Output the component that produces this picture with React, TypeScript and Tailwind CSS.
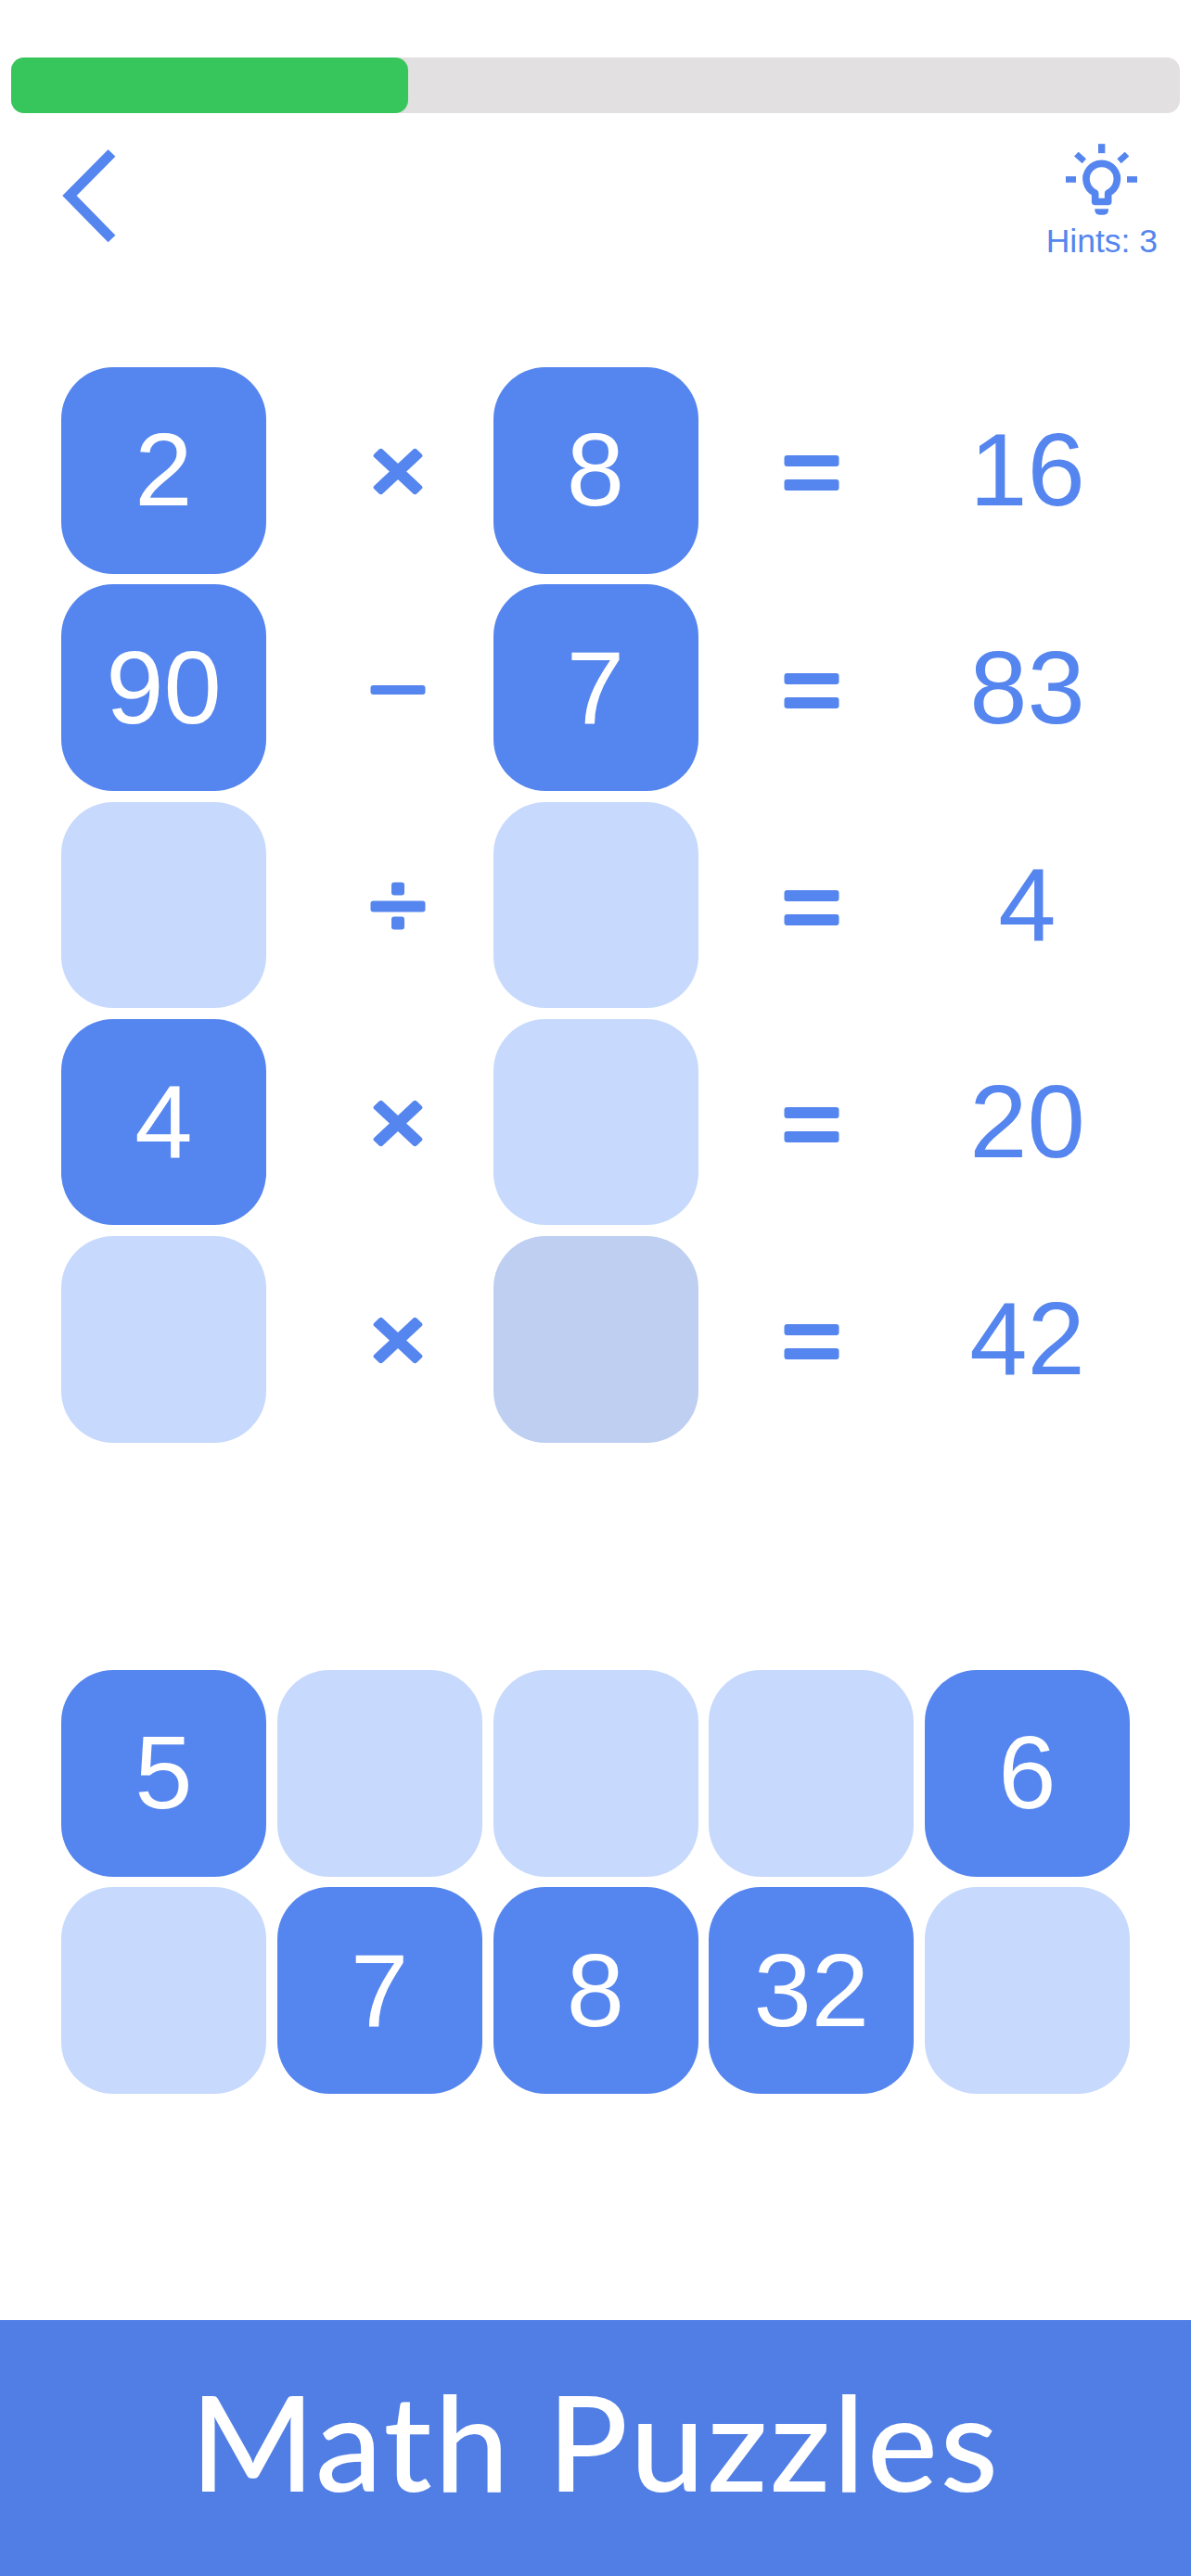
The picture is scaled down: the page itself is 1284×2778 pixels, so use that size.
const blue = 'bg-[#5585ee]';

type Op = 'times' | 'minus' | 'divide';

function Tile({ value, dark }: { value?: string; dark?: boolean }) {
  const bg = value ? blue : dark ? 'bg-[#bfcff1]' : 'bg-[#c7d9fc]';
  return (
    <div className={`w-[221px] h-[222.5px] rounded-[56px] flex items-center justify-center text-white text-[112px] ${bg}`}>
      {value}
    </div>
  );
}

function OpIcon({ op }: { op: Op }) {
  return (
    <svg viewBox="0 0 80 80" className="w-[80px] h-[80px] text-[#5585ee]" fill="currentColor">
      {op === 'times' && (
        <g transform="translate(40 41.5) scale(1 0.93)">
          <rect x="-32.5" y="-6.5" width="65" height="13" rx="3" transform="rotate(45)" />
          <rect x="-32.5" y="-6.5" width="65" height="13" rx="3" transform="rotate(-45)" />
        </g>
      )}
      {op === 'minus' && <rect x="10.5" y="37" width="59" height="10" rx="3" />}
      {op === 'divide' && (
        <g>
          <rect x="10.5" y="35.5" width="59" height="12" rx="3" />
          <rect x="33" y="15.5" width="14" height="14" rx="3" />
          <rect x="33" y="52.5" width="14" height="14" rx="3" />
        </g>
      )}
    </svg>
  );
}

function EqualsIcon() {
  return (
    <svg viewBox="0 0 80 80" className="w-[80px] h-[80px] text-[#5585ee]" fill="currentColor">
      <rect x="10.5" y="24" width="59" height="12" rx="3" />
      <rect x="10.5" y="50" width="59" height="12" rx="3" />
    </svg>
  );
}

function Bulb() {
  return (
    <svg viewBox="199 345 231 230" className="w-[77px] h-[77px] text-[#5585ee]" fill="currentColor">
      <rect x="304" y="345" width="22" height="30" />
      <rect x="199" y="450" width="33" height="20" />
      <rect x="397" y="450" width="33" height="20" />
      <path d="M240 371 L265 393 L252 408 L226 385 Z" />
      <path d="M390 371 L365 393 L378 408 L404 385 Z" />
      <path d="M294 504 V532 H336 V504 A50 50 0 1 0 294 504 Z" fill="none" stroke="currentColor" strokeWidth="23" strokeLinejoin="round" />
      <path d="M293 555 H337 V560 A15 15 0 0 1 322 575 H308 A15 15 0 0 1 293 560 Z" />
    </svg>
  );
}

const equations: { a?: string; op: Op; b?: string; result: string; darkB?: boolean }[] = [
  { a: '2', op: 'times', b: '8', result: '16' },
  { a: '90', op: 'minus', b: '7', result: '83' },
  { op: 'divide', result: '4' },
  { a: '4', op: 'times', result: '20' },
  { op: 'times', result: '42', darkB: true },
];

const answers = ['5', '', '', '', '6', '', '7', '8', '32', ''];

export default function App() {
  return (
    <div className="w-[1284px] h-[2778px] bg-white flex flex-col font-['Liberation_Sans',sans-serif] overflow-hidden">
      <div className="mt-[62px] mx-[12px] h-[60px] rounded-[14px] bg-[#e2e0e1]">
        <div className="w-[428px] h-full rounded-[14px] bg-[#37c65b]" />
      </div>

      <div className="mt-[33px] flex justify-between items-start pl-[60px] pr-[36px]">
        <svg viewBox="60 155 70 110" className="w-[70px] h-[110px] text-[#5585ee]" fill="none">
          <path d="M120.5 165 L75 211 L120.5 257.5" stroke="currentColor" strokeWidth="11" />
        </svg>
        <div className="flex flex-col items-center">
          <Bulb />
          <span className="mt-[8px] text-[35.5px] leading-[40px] text-[#5585ee]">Hints: 3</span>
        </div>
      </div>

      <div className="mt-[116px] px-[66px] flex flex-col gap-y-[11.75px]">
        {equations.map((eq, i) => (
          <div key={i} className="grid grid-cols-[repeat(5,221px)] gap-x-[11.75px] items-center">
            <Tile value={eq.a} />
            <div className="flex justify-center pl-[40px]">
              <OpIcon op={eq.op} />
            </div>
            <Tile value={eq.b} dark={eq.darkB} />
            <div className="flex justify-center">
              <EqualsIcon />
            </div>
            <div className="text-center text-[112px] text-[#5585ee]">{eq.result}</div>
          </div>
        ))}
      </div>

      <div className="mt-[245.5px] px-[66px] grid grid-cols-[repeat(5,221px)] gap-x-[11.75px] gap-y-[11.75px]">
        {answers.map((v, i) => (
          <Tile key={i} value={v || undefined} />
        ))}
      </div>

      <div className="mt-auto h-[276px] pb-[16px] bg-[#507ee5] flex items-center justify-center text-white text-[144px] tracking-[2.5px] font-medium font-['Lato',sans-serif]">
        Math Puzzles
      </div>
    </div>
  );
}
